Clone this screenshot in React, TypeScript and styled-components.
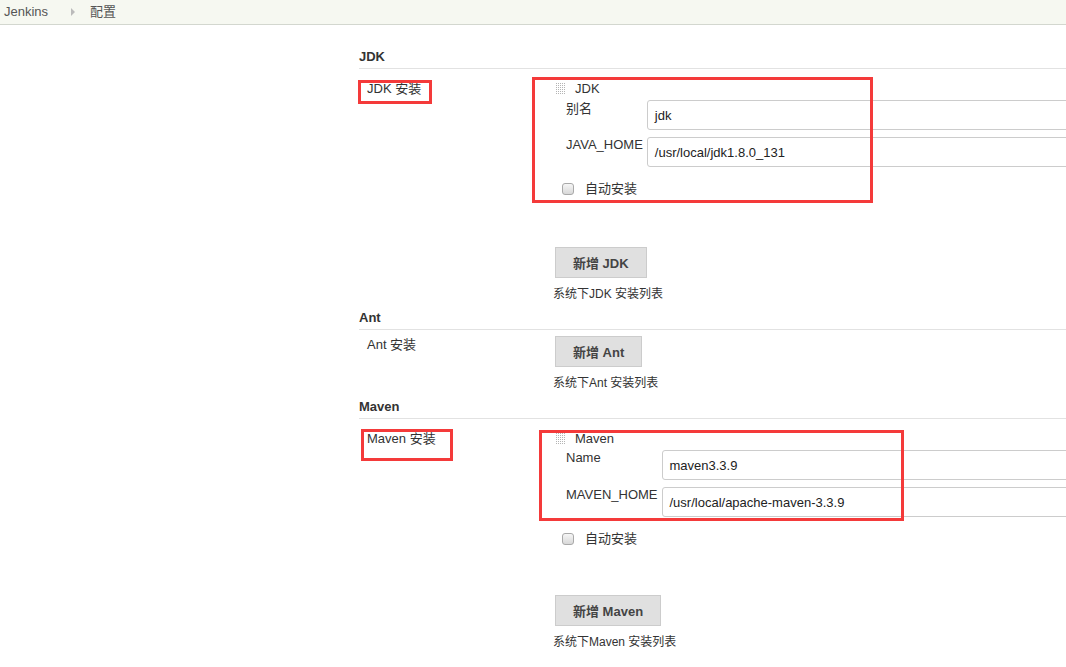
import React from "react";
import styled, { createGlobalStyle } from "styled-components";

const GlobalStyle = createGlobalStyle`
  html, body {
    margin: 0;
    padding: 0;
    background: #fff;
    overflow: hidden;
  }
  body {
    font-family: "Liberation Sans", Arial, "Noto Sans CJK SC", sans-serif;
    font-size: 13px;
    color: #333;
  }
`;

const Header = styled.div`
  height: 24px;
  background: #f6f8f1;
  border-bottom: 1px solid #d3d7cf;
  display: flex;
  align-items: center;
  padding-left: 4px;
`;

const Crumb = styled.span`
  font-size: 13px;
  color: #555;
  line-height: 16px;
`;

const CrumbArrow = styled.span`
  width: 0;
  height: 0;
  border-top: 4px solid transparent;
  border-bottom: 4px solid transparent;
  border-left: 4px solid #bbb;
  margin: 0 15px 0 23px;
`;

const Main = styled.div`
  margin-left: 359px;
  width: 900px;
  padding-top: 24px;
`;

const Section = styled.div`
  & + & {
    margin-top: 9px;
  }
`;

const SectionTitle = styled.div`
  font-weight: bold;
  line-height: 16px;
  padding-bottom: 3px;
  border-bottom: 1px solid #e2e2e2;
`;

const Row = styled.div<{ $top: number }>`
  display: grid;
  grid-template-columns: 196px 1fr;
  padding-top: ${(p) => p.$top}px;
`;

const LabelCell = styled.div<{ $pad?: number }>`
  position: relative;
  padding-left: 8px;
  padding-top: ${(p) => p.$pad ?? 0}px;
  line-height: 16px;
  align-self: start;
`;

const ContentCell = styled.div`
  position: relative;
`;

const Highlight = styled.div<{ $l: number; $t: number; $w: number; $h: number }>`
  position: absolute;
  left: ${(p) => p.$l}px;
  top: ${(p) => p.$t}px;
  width: ${(p) => p.$w}px;
  height: ${(p) => p.$h}px;
  box-sizing: border-box;
  border: 3px solid #f43a3a;
  pointer-events: none;
`;

const BlockHead = styled.div`
  display: flex;
  align-items: center;
  gap: 9px;
  line-height: 16px;
  padding-left: 1px;
`;

const FieldGrid = styled.div`
  display: grid;
  grid-template-columns: auto 1fr;
  column-gap: 4px;
  row-gap: 7px;
  margin-left: 11px;
  margin-top: 3px;
`;

const FieldLabel = styled.div<{ $pad: number }>`
  line-height: 16px;
  padding-top: ${(p) => p.$pad}px;
`;

const TextInput = styled.div`
  height: 30px;
  box-sizing: border-box;
  border: 1px solid #ccc;
  border-radius: 3px;
  padding-left: 7px;
  display: flex;
  align-items: center;
  font-size: 13px;
  color: #222;
  background: #fff;
`;

const CheckRow = styled.div`
  display: flex;
  align-items: center;
  gap: 11px;
  margin-top: 14px;
  margin-left: 7px;
  line-height: 16px;
`;

const CheckBox = styled.span`
  width: 12px;
  height: 12px;
  box-sizing: border-box;
  border: 1px solid #a9a9a9;
  border-radius: 3px;
  background: linear-gradient(#f6f6f6, #d8d8d8);
`;

const Button = styled.div<{ $gap: number }>`
  display: inline-flex;
  align-items: center;
  justify-content: center;
  height: 31px;
  box-sizing: border-box;
  padding: 0 17px;
  margin-top: ${(p) => p.$gap}px;
  background: #e0e0e0;
  border: 1px solid #ccc;
  font-weight: bold;
  color: #444;
`;

const Description = styled.div`
  font-size: 12px;
  line-height: 14px;
  margin-top: 9px;
  margin-left: -2px;
  color: #333;
`;

function Handle() {
  const dots = [];
  for (let y = 0; y < 6; y++) {
    for (let x = 0; x < 5; x++) {
      dots.push(<rect key={`${x}-${y}`} x={x * 2} y={y * 2} width={1} height={1} fill="#b4b4b4" />);
    }
  }
  return (
    <svg width={10} height={12} viewBox="0 0 10 12">
      {dots}
    </svg>
  );
}

function Field({ label, value, pad }: { label: string; value: string; pad: number }) {
  return (
    <>
      <FieldLabel $pad={pad}>{label}</FieldLabel>
      <TextInput>{value}</TextInput>
    </>
  );
}

export default function App() {
  return (
    <>
      <GlobalStyle />
      <Header>
        <Crumb>Jenkins</Crumb>
        <CrumbArrow />
        <Crumb>配置</Crumb>
      </Header>
      <Main>
        <Section>
          <SectionTitle>JDK</SectionTitle>
          <Row $top={12}>
            <LabelCell>
              JDK 安装
              <Highlight $l={-1} $t={-1} $w={74} $h={24} />
            </LabelCell>
            <ContentCell>
              <Highlight $l={-23} $t={-4} $w={341} $h={126} />
              <BlockHead>
                <Handle />
                JDK
              </BlockHead>
              <FieldGrid>
                <Field label="别名" value="jdk" pad={1} />
                <Field label="JAVA_HOME" value="/usr/local/jdk1.8.0_131" pad={0} />
              </FieldGrid>
              <CheckRow>
                <CheckBox />
                自动安装
              </CheckRow>
              <Button $gap={50}>新增 JDK</Button>
              <Description>系统下JDK 安装列表</Description>
            </ContentCell>
          </Row>
        </Section>
        <Section>
          <SectionTitle>Ant</SectionTitle>
          <Row $top={6}>
            <LabelCell $pad={1}>Ant 安装</LabelCell>
            <ContentCell>
              <Button $gap={0}>新增 Ant</Button>
              <Description>系统下Ant 安装列表</Description>
            </ContentCell>
          </Row>
        </Section>
        <Section>
          <SectionTitle>Maven</SectionTitle>
          <Row $top={12}>
            <LabelCell>
              Maven 安装
              <Highlight $l={2} $t={-2} $w={92} $h={32} />
            </LabelCell>
            <ContentCell>
              <Highlight $l={-16} $t={-1} $w={365} $h={91} />
              <BlockHead>
                <Handle />
                Maven
              </BlockHead>
              <FieldGrid>
                <Field label="Name" value="maven3.3.9" pad={-1} />
                <Field label="MAVEN_HOME" value="/usr/local/apache-maven-3.3.9" pad={0} />
              </FieldGrid>
              <CheckRow>
                <CheckBox />
                自动安装
              </CheckRow>
              <Button $gap={48}>新增 Maven</Button>
              <Description>系统下Maven 安装列表</Description>
            </ContentCell>
          </Row>
        </Section>
      </Main>
    </>
  );
}
